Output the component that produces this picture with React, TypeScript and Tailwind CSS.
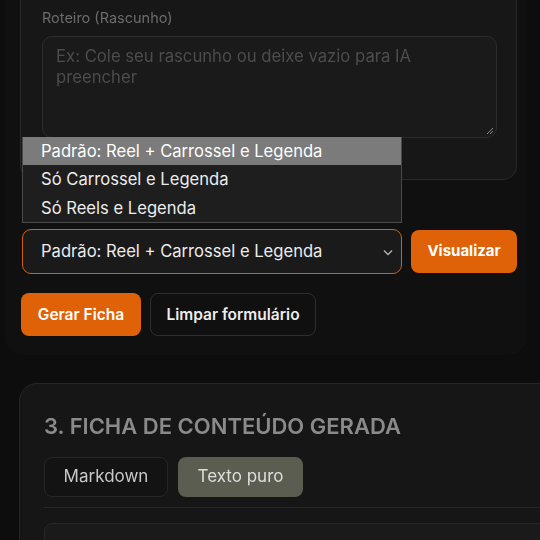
import React from "react";

export default function App() {
  return (
    <div
      className="relative w-[540px] h-[540px] overflow-hidden bg-[#0d0d0d]"
      style={{ fontFamily: "Inter, 'Noto Sans', sans-serif" }}
    >
      {/* outer panel */}
      <div className="ml-[5px] flex h-[355px] w-[522px] flex-col rounded-b-[18px] bg-[#101010]">
        {/* first card (cut at top) */}
        <div className="blur-[0.5px] ml-[15px] mt-[-20px] h-[200px] w-[497px] shrink-0 rounded-b-[14px] border border-[#2a2a2a] bg-[#171717] pl-[21px] pr-[19px] pt-[27px]">
          <div className="text-[14.5px] leading-[20px] text-[#6b6b6b]">Roteiro (Rascunho)</div>
          <div className="relative mt-[8px] h-[102px] w-[455px] rounded-[10px] border border-[#2c2c2c] bg-[#1a1a1a] px-[13px] pt-[9px] text-[16.7px] leading-[21px] text-[#4c4c4c]">
            Ex: Cole seu rascunho ou deixe vazio para IA
            <br />
            preencher
            <svg className="absolute right-[2px] bottom-[2px]" width="8" height="8" viewBox="0 0 8 8">
              <path d="M7 1 L1 7 M7 4 L4 7" stroke="#8a8a8a" strokeWidth="1" />
            </svg>
          </div>
        </div>

        {/* select row */}
        <div className="mt-[49px] ml-[17px] flex items-center gap-[9px]">
          <div className="relative flex h-[45px] w-[380px] items-center rounded-[9px] border border-[#d2600f] bg-[#1a1a1a] pl-[18px] text-[16.6px] text-[#ececec]">
            Padrão: Reel + Carrossel e Legenda
            <svg className="absolute right-[8px] top-[19px]" width="10" height="7" viewBox="0 0 10 7">
              <path d="M1 1.5 L5 5.5 L9 1.5" stroke="#b5b5b5" strokeWidth="1.3" fill="none" />
            </svg>
          </div>
          <button className="h-[43px] w-[106px] rounded-[8px] bg-[#df6208] text-[15px] font-bold text-white">
            Visualizar
          </button>
        </div>

        {/* action buttons */}
        <div className="mt-[19px] ml-[16px] flex items-center gap-[9px]">
          <button className="h-[43px] w-[120px] rounded-[8px] bg-[#df6208] text-[15.5px] font-semibold text-white">
            Gerar Ficha
          </button>
          <button className="h-[43px] w-[166px] rounded-[8px] border border-[#2e2e2e] bg-[#101010] text-[15.5px] font-semibold text-[#ececec]">
            Limpar formulário
          </button>
        </div>
      </div>

      {/* bottom card */}
      <div className="blur-[0.5px] ml-[19px] mt-[28px] h-[200px] w-[540px] rounded-tl-[18px] border border-[#262626] bg-[#161616] pl-[24px] pt-[28px]">
        <div className="text-[22px] leading-[28px] font-semibold text-[#8a8a8a]">
          3. FICHA DE CONTEÚDO GERADA
        </div>
        <div className="mt-[17px] flex gap-[10px]">
          <div className="flex h-[40px] w-[124px] items-center justify-center rounded-[8px] border border-[#262626] bg-[#131313] text-[17px] text-[#c9c9c9]">
            Markdown
          </div>
          <div className="flex h-[40px] w-[125px] items-center justify-center rounded-[8px] bg-[#5c5d51] text-[17px] text-[#dedede]">
            Texto puro
          </div>
        </div>
        <div className="mt-[10px] h-px bg-[#262626]" />
        <div className="mt-[15px] h-[40px] rounded-tl-[8px] border border-[#262626] bg-[#1a1a1a]" />
      </div>

      {/* open dropdown list */}
      <div className="absolute left-[22px] top-[137px] w-[380px] border border-t-0 border-[#4a4a4a] bg-[#1e1e1e] text-[16.6px]">
        <div className="flex h-[28px] items-center bg-[#7b7b7b] pl-[18px] text-white">
          Padrão: Reel + Carrossel e Legenda
        </div>
        <div className="flex h-[29px] items-center pl-[18px] text-[#ececec]">Só Carrossel e Legenda</div>
        <div className="flex h-[28px] items-center pl-[18px] text-[#ececec]">Só Reels e Legenda</div>
      </div>
    </div>
  );
}
